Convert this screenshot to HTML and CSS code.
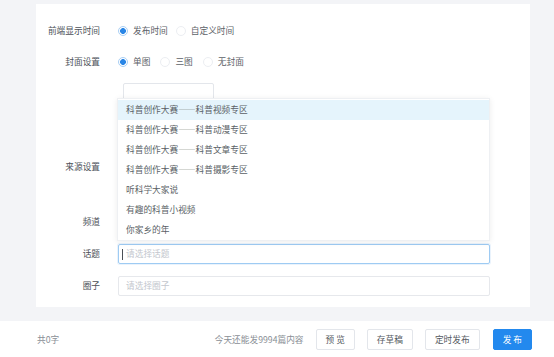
FILE: index.html
```html
<!DOCTYPE html>
<html lang="zh-CN">
  <head>
    <meta charset="UTF-8" />
    <meta name="viewport" content="width=device-width, initial-scale=1.0" />
    <link rel="stylesheet" href="styles.css">
    <title>发布</title>
  </head>
  <body>
    <div class="page">
      <div class="card">
        <form class="form">
          <div class="row">
            <span class="row__label">前端显示时间</span>
            <div class="radios">
              <label class="radio radio_checked"><i class="radio__dot"></i>发布时间</label>
              <label class="radio"><i class="radio__dot"></i>自定义时间</label>
            </div>
          </div>
          <div class="row">
            <span class="row__label">封面设置</span>
            <div class="radios radios_wide">
              <label class="radio radio_checked"><i class="radio__dot"></i>单图</label>
              <label class="radio"><i class="radio__dot"></i>三图</label>
              <label class="radio"><i class="radio__dot"></i>无封面</label>
            </div>
          </div>
          <div class="row row_cover">
            <span class="row__label"></span>
            <div class="cover"></div>
          </div>
          <div class="row row_source">
            <span class="row__label">来源设置</span>
            <div class="source"></div>
          </div>
          <div class="row">
            <span class="row__label">频道</span>
            <div class="channel"></div>
          </div>
          <div class="row row_topic">
            <span class="row__label">话题</span>
            <div class="select">
              <div class="input input_focus"><i class="caret"></i>请选择话题</div>
              <ul class="dropdown">
                <li class="dropdown__item dropdown__item_hover">科普创作大赛——科普视频专区</li>
                <li class="dropdown__item">科普创作大赛——科普动漫专区</li>
                <li class="dropdown__item">科普创作大赛——科普文章专区</li>
                <li class="dropdown__item">科普创作大赛——科普摄影专区</li>
                <li class="dropdown__item">听科学大家说</li>
                <li class="dropdown__item">有趣的科普小视频</li>
                <li class="dropdown__item">你家乡的年</li>
              </ul>
            </div>
          </div>
          <div class="row row_circle">
            <span class="row__label">圈子</span>
            <div class="input">请选择圈子</div>
          </div>
        </form>
      </div>
      <div class="footer">
        <span class="footer__count">共0字</span>
        <span class="footer__left">今天还能发9994篇内容</span>
        <button class="button" type="button">预&nbsp;览</button>
        <button class="button" type="button">存草稿</button>
        <button class="button" type="button">定时发布</button>
        <button class="button button_primary" type="button">发&nbsp;布</button>
      </div>
    </div>
  </body>
</html>
```

FILE: styles.css
```css
*,
*::after,
*::before {
  box-sizing: border-box;
  margin: 0;
  padding: 0;
}

ul {
  list-style: none;
}

body {
  background: #f3f4f7;
  font-family: "Noto Sans CJK SC", "Noto Sans", sans-serif;
  font-size: 8.7px;
  color: #555a61;
}

.card {
  background: #fff;
  margin: 4px 24px 0 36px;
  height: 303px;
  padding-top: 17px;
}

.form {
  display: flex;
  flex-direction: column;
  gap: 11px;
}

.row {
  display: grid;
  grid-template-columns: 64px 1fr;
  column-gap: 18px;
  padding-right: 40px;
  align-items: center;
  min-height: 20px;
}

.row__label {
  text-align: right;
  line-height: 20px;
  color: #4c5158;
}

.radios {
  display: flex;
  gap: 8px;
}

.radios_wide {
  gap: 10px;
}

.radio {
  display: flex;
  align-items: center;
  gap: 5px;
  color: #5d6268;
  line-height: 20px;
}

.radio__dot {
  width: 10px;
  height: 10px;
  border-radius: 50%;
  border: 1px solid #eceef2;
  background: #fff;
}

.radio_checked .radio__dot {
  border-color: #a9cff5;
  background: radial-gradient(circle, #2a86e6 0 2.6px, #fff 3.2px);
}

.cover {
  margin-left: 5px;
  width: 91px;
  height: 56px;
  border: 1px solid #e3e6eb;
  border-radius: 2px;
}

.row_source {
  align-items: start;
  height: 51px;
}

.row_source .row__label {
  padding-top: 7px;
}

.channel {
  height: 20px;
}

.row_topic {
  margin-top: 1px;
}

.row_circle {
  margin-top: 1px;
}

.select {
  position: relative;
}

.input {
  height: 20px;
  border: 1px solid #e6e8ec;
  border-radius: 2px;
  padding-left: 7px;
  line-height: 18px;
  color: #c3c7ce;
  display: flex;
  align-items: center;
}

.input_focus {
  border-color: #9ecbf3;
  padding-left: 3px;
  box-shadow: 0 0 0 1px #eaf3fc;
}

.caret {
  width: 1px;
  height: 11px;
  background: #4a4f55;
  margin-right: 3px;
}

.dropdown {
  position: absolute;
  left: -1px;
  right: 0;
  bottom: calc(100% + 3px);
  background: #fff;
  border: 1px solid #eef0f3;
  box-shadow: 0 1px 6px rgba(0, 0, 0, 0.08);
  padding: 1px 0 0;
}

.dropdown__item {
  height: 20px;
  line-height: 20px;
  padding-left: 8px;
  color: #5a5f66;
  white-space: nowrap;
}

.dropdown__item_hover {
  background: #e5f4fc;
}

.footer {
  margin-top: 14px;
  height: 36px;
  background: #fff;
  display: flex;
  align-items: center;
  gap: 12px;
  padding: 0 22px 0 37px;
}

.footer__count {
  color: #8a8f96;
  margin-right: auto;
}

.footer__left {
  color: #8a8f96;
}

.button {
  font-family: inherit;
  font-size: 8.7px;
  height: 21px;
  padding: 0 9px;
  border: 1px solid #e3e6eb;
  border-radius: 2px;
  background: #fff;
  color: #555a61;
  cursor: pointer;
}

.button_primary {
  background: #2389ee;
  border-color: #2389ee;
  color: #fff;
  margin-left: 1px;
}
```
